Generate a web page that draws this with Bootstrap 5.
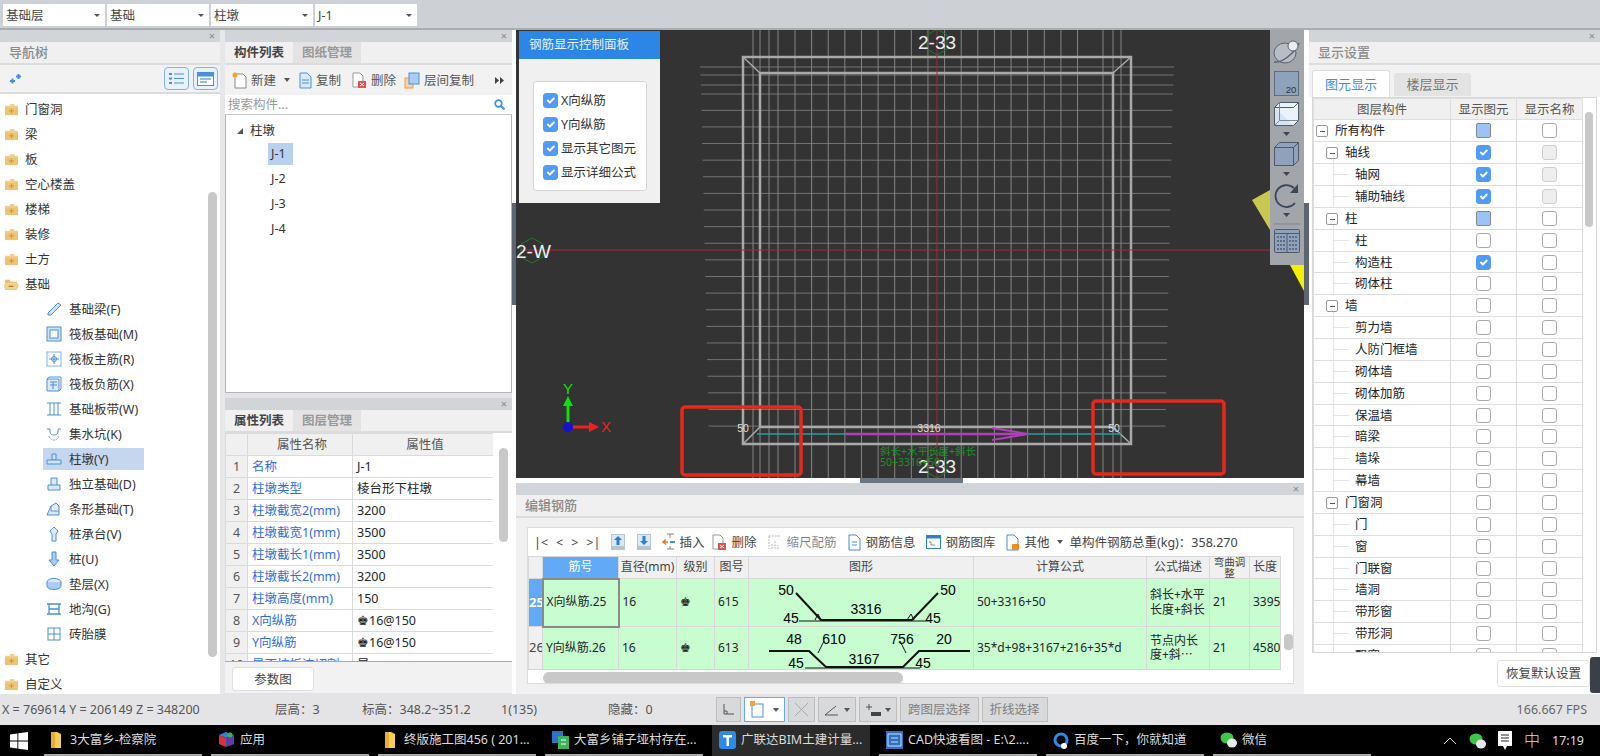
<!DOCTYPE html>
<html lang="zh-CN">
<head>
<meta charset="UTF-8">
<title>广联达BIM土建计量</title>
<link rel="stylesheet" href="https://cdn.jsdelivr.net/npm/bootstrap@5.3.0/dist/css/bootstrap.min.css">
<style>
html, body { height: 756px; overflow: hidden; }
body { width: 1600px; font: 12.5px/1.2 "Noto Sans", "Noto Sans CJK SC", sans-serif; color: #333; background: #e4e4e6; position: relative; }
svg { display: block; flex: none; }
.topbar { height: 30px; background: #cdd0d4; border-bottom: 2px solid #a9acb0; padding: 4px 3px 0; gap: 2px; }
.dd-box { width: 102px; height: 22px; background: #fff; padding: 0 5px 0 3px; font-size: 12.5px; color: #444; }
.dd-caret { width: 0; height: 0; border: 3px solid transparent; border-top: 3px solid #555; border-bottom: 0; }
.workspace { height: 664px; }
.pane { background: #fff; }
.nav-pane { width: 220px; }
.gutter { width: 5px; background: #e6e7e9; }
.mid-col { width: 287px; }
.strip { height: 12px; background: #d1d4d8; color: #888; font-size: 11px; line-height: 12px; text-align: right; padding-right: 5px; flex: none; }
.pane-title { height: 23px; background: #f0f0f0; border-bottom: 2px solid #dcdcdc; color: #8b8b8b; font-size: 13px; font-weight: 500; line-height: 21px; padding-left: 9px; flex: none; }
.nav-tools { height: 29px; background: #f2f2f2; border-bottom: 2px solid #dcdcdc; padding: 0 2px 0 8px; flex: none; }
.view-btn { width: 25px; height: 23px; border: 1.5px solid #7db4ee; border-radius: 4px; background: #e8f2fc; margin-left: 4px; }
.tree-scroll { flex: 1; min-height: 0; overflow: hidden; }
.tree-list { width: 208px; padding-top: 2.5px; }
.nav-row { height: 25px; padding-left: 4px; gap: 6px; }
.nav-sub { padding-left: 46px; gap: 7px; }
.nav-sub.picked { background: linear-gradient(#c5d7ee, #c5d7ee) 43px 1px / 101px 22px no-repeat; }
.fake-thumb { width: 9px; border-radius: 5px; background: #c8c8c8; }
.nav-thumb { height: 465px; margin: 98px 3px 0 0; }
.tabs-row { height: 23px; background: #f0f0f0; border-bottom: 2px solid #dcdcdc; flex: none; }
.tab-on { width: 68px; height: 21px; font-weight: 700; color: #444; font-size: 12.5px; text-align: center; line-height: 22px; }
.tab-off { width: 68px; height: 21px; font-weight: 700; background: #e3e3e3; color: #999; font-size: 12.5px; text-align: center; line-height: 22px; }
.list-tools { height: 30px; background: #f2f2f2; padding-left: 7px; flex: none; color: #555; }
.list-tools .pull-r { margin-left: 11px; }
.search-row { height: 20px; border-bottom: 1px solid #c8c8c8; color: #999; padding: 0 7px 0 3px; flex: none; }
.part-tree { height: 278px; border-left: 1px solid #b5b5b5; border-right: 1px solid #b5b5b5; border-bottom: 1px solid #b5b5b5; padding: 3px 0 0 11px; flex: none; }
.part-row { height: 25px; }
.part-item { width: 25px; height: 22px; margin-left: 31px; padding-left: 3px; line-height: 22px; }
.part-on { background: #b9d1f0; }
.tri-down { width: 0; height: 0; border-style: solid; border-width: 0 0 6px 6px; border-color: transparent transparent #555 transparent; margin-right: 7px; }
.prop-pane { margin-top: 5px; height: 295px; }
.prop-wrap { height: 229px; overflow: hidden; border-bottom: 1px solid #aaa; flex: none; }
.prop-clip { width: 268px; overflow: hidden; }
.grid-a { table-layout: fixed; width: 268px; border-color: #dadada; }
.grid-a > :not(caption) > * > * { padding: 0 0 0 4px; height: 22px; font-size: 12.5px; vertical-align: middle; white-space: nowrap; overflow: hidden; border-width: 1px; }
.grid-a th { background-color: #f0f0f0; font-weight: 400; color: #555; text-align: center; }
.grid-a td.num-cell { background-color: #f0f0f0; text-align: center; padding: 0; color: #555; }
.grid-a td.key-cell { color: #2f6fdc; }
.c-num { width: 22px; } .c-key { width: 105px; } .c-val { width: 141px; }
.prop-thumb { height: 94px; margin: 15px 4px 0 6px; }
.prop-foot { height: 32px; background: #f2f2f2; padding: 5px 0 0 7px; flex: 1; }
.plain-btn { background: #fff; border: 1px solid #e0e0e0; border-radius: 3px; color: #444; font-size: 12.5px; padding: 0; }
.foot-btn { width: 82px; height: 24px; }
.center-col { width: 797px; }
.edge { width: 4px; background: #fff; flex: none; }
.edge-r { width: 5px; }
.edge-tab { height: 102px; margin-top: 173px; background: #5d6670; }
.view-col { width: 788px; }
.canvas-wrap { height: 448px; background: #333; position: relative; overflow: hidden; flex: none; }
.rebar-panel { position: absolute; left: 3px; top: 1px; width: 141px; height: 172px; background: #f0f0f0; }
.rebar-head { height: 28px; background: #2b86e5; color: #e8f2fc; font-size: 12.5px; line-height: 28px; padding-left: 10px; }
.rebar-box { margin: 22px 0 0 14px; width: 114px; height: 110px; background: #fff; border: 1px solid #d5d5d5; border-radius: 3px; padding: 6px 0 0 9px; }
.rebar-line { height: 24px; gap: 3px; font-size: 12.5px; white-space: nowrap; }
.tick { width: 15px; height: 15px; margin: 0; border-radius: 2px; background-color: #fff; border: 1px solid #a8a8a8; flex: none; }
.tick:checked { background-color: #4f9bf5; border-color: #4f9bf5; }
.tick:disabled { opacity: 1; background-color: #eee; border-color: #ccc; }
.tick-part { background-color: #9cc3f7; border: 1.5px solid #888; display: block; }
.tool-strip { position: absolute; left: 754px; top: -1px; width: 34px; height: 236px; background: #a2a5aa; }
.hinge { height: 5px; background: #fff; flex: none; }
.hinge-tab { width: 103px; height: 5px; margin-left: 344px; background: #6c7680; }
.rebar-pane { height: 211px; background: #f0f0f0; flex: none; }
.rebar-card { margin: 9px 10px 0 11px; height: 157px; background: #fff; border: 1px solid #dcdcdc; overflow: hidden; }
.card-tools { height: 28px; padding-left: 6px; color: #444; white-space: nowrap; flex: none; }
.sp-3 { margin-left: 3px; } .sp-7 { margin-left: 7px; } .sp-11 { margin-left: 11px; } .sp-12 { margin-left: 12px; } .sp-20 { margin-left: 20px; }
.grid-scroll-v { width: 9px; height: 16px; background: #c8c8c8; border-radius: 4px; margin: 78px 0 0 3px; }
.grid-b { table-layout: fixed; width: 752px; border-color: #d8d8d8; }
.grid-b > :not(caption) > * > * { padding: 0 0 0 3px; font-size: 12px; vertical-align: middle; border-width: 1px; overflow: hidden; }
.grid-b th { height: 21px; padding: 0; background-color: #f0f0f0; font-weight: 400; text-align: center; color: #444; white-space: nowrap; }
.grid-b th.head-on { background-color: #62aaf8; color: #fff; }
.grid-b th.bend-head { font-size: 10.5px; line-height: 10.5px; white-space: normal; }
.grid-b td { background-color: #c8fdd0; line-height: 1.2; }
.grid-b td.row-no { background-color: #f0f0f0; padding: 0; text-align: center; font-size: 13px; color: #444; }
.grid-b td.row-no-on { background-color: #62aaf8; color: #fff; font-weight: 700; }
.grid-b td.cell-on { border: 2px solid #8a8a8a; }
.grid-b td.shape-cell { padding: 0; }
.h-26 { height: 43px; } .h-25 { height: 48px; }
.w-a { width: 14px; } .w-b { width: 76px; } .w-c { width: 58px; } .w-d { width: 38px; } .w-e { width: 34px; } .w-f { width: 225px; } .w-g { width: 173px; } .w-h { width: 63px; } .w-i { width: 40px; } .w-j { width: 31px; }
.h-bar { height: 12px; width: 360px; margin: 2px 0 0 15px; border-radius: 6px; background: #c8c8c8; }
.right-pane { width: 291px; }
.set-tabs { height: 32px; background: #f2f2f2; padding: 5px 0 0 3px; gap: 4px; flex: none; }
.set-on { width: 78px; height: 27px; background: #fff; border: 1px solid #ddd; border-bottom: 0; border-radius: 3px 3px 0 0; color: #3f8fe8; font-size: 13px; text-align: center; line-height: 26px; }
.set-off { width: 77px; height: 23px; margin-top: 3px; background: #e3e3e3; color: #777; border-radius: 3px 3px 0 0; font-size: 13px; text-align: center; line-height: 23px; }
.layer-box { height: 556px; margin: 0 3px; border: 1px solid #d8d8d8; overflow: hidden; flex: none; }
.grid-c { table-layout: fixed; width: 269px; border-color: #dedede; }
.grid-c > :not(caption) > * > * { padding: 0; height: 22px; font-size: 12.5px; vertical-align: middle; white-space: nowrap; overflow: hidden; border-width: 1px; }
.grid-c th { background-color: #f0f0f0; font-weight: 400; text-align: center; color: #555; height: 21px; }
.grid-c > tbody > tr:nth-child(7n) > td { height: 21px; }
.grid-c .tick { display: block; margin: 0 auto; }
.w-m { width: 137px; } .w-n { width: 66px; }
.lv-0 { padding-left: 2px !important; }
.lv-1 { padding-left: 12px !important; background: linear-gradient(#e4e4e4, #e4e4e4) 19px 16px / 1px 6px no-repeat; }
.lv-2 { padding-left: 41px !important; background: linear-gradient(#e4e4e4, #e4e4e4) 19px 0 / 1px 100% no-repeat, linear-gradient(#e4e4e4, #e4e4e4) 19px 50% / 16px 1px no-repeat; }
.lv-1 .toggle-box, .lv-0 .toggle-box { margin-right: 7px; }
.toggle-box { width: 12px; height: 12px; border: 1px solid #999; border-radius: 2px; display: inline-block; vertical-align: -2px; background: #fff; position: relative; }
.toggle-box::after { content: ""; position: absolute; left: 2.5px; right: 2.5px; top: 4.5px; height: 1px; background: #555; }
.set-thumb { position: absolute; right: 7px; top: 82px; width: 8px; height: 115px; background: #c8c8c8; border-radius: 4px; }
.restore-row { height: 40px; padding: 7px 10px 0 0; justify-content: flex-end; }
.restore-btn { width: 93px; height: 27px; }
.statusbar { height: 31px; background: #e4e4e6; padding-left: 2px; color: #555; white-space: nowrap; font-size: 12.5px; }
.stat-a { width: 273px; } .stat-b { width: 87px; } .stat-c { width: 139px; } .stat-d { width: 107px; } .stat-e { width: 108px; }
.bar-btn { height: 25px; background: #d8d9db; border: 1px solid #bdbdbd; color: #808080; padding: 0 5px; margin-right: 3px; white-space: nowrap; }
.bar-wide { padding: 0 7px; }
.bar-on { background: #fff; border-color: #6aa9e8; }
.fps { margin-left: auto; padding-right: 13px; color: #666; }
.taskbar { height: 31px; background: #000; color: #ddd; font-size: 12.5px; padding-left: 44px; white-space: nowrap; }
.win-logo { position: absolute; left: 10px; bottom: 6px; }
.task-item { width: 158px; height: 31px; margin-right: 9px; padding-left: 7px; gap: 5px; border-bottom: 2px solid #a9a9a9; }
.task-now { background: #2b2b2b; border-bottom-color: #2b2b2b; }
.tray { margin-left: auto; gap: 12px; padding-right: 16px; }
.meter { position: absolute; left: 1590px; top: 657px; width: 10px; height: 36px; background: #3b4048; border-radius: 3px 0 0 3px; }
</style>
</head>
<body>
<svg width="0" height="0" class="position-absolute">
  <symbol id="i-folder" viewBox="0 0 16 14"><path d="M1 3h5l1-2h4v2h4v10H1z" fill="#f1cf8a"/><path d="M1 5h14v8H1z" fill="#edc474"/><path d="M8 6v5M5.5 8.5h5" stroke="#d79a37" stroke-width="1.3"/></symbol>
  <symbol id="i-folder-open" viewBox="0 0 16 14"><path d="M1 2h5l1 2h7v2H1z" fill="#e9bd6a"/><path d="M0 6h16l-2 7H1z" fill="#f1cf8a"/><path d="M5 9h5" stroke="#a97c2c" stroke-width="1.3"/></symbol>
  <symbol id="i-caret" viewBox="0 0 6 4"><path d="M0 0h6L3 4z" fill="#555"/></symbol>
</svg>

<div class="topbar d-flex">
  <div class="dd-box d-flex align-items-center justify-content-between"><span>基础层</span><i class="dd-caret"></i></div>
  <div class="dd-box d-flex align-items-center justify-content-between"><span>基础</span><i class="dd-caret"></i></div>
  <div class="dd-box d-flex align-items-center justify-content-between"><span>柱墩</span><i class="dd-caret"></i></div>
  <div class="dd-box d-flex align-items-center justify-content-between"><span>J-1</span><i class="dd-caret"></i></div>
</div>

<div class="workspace d-flex">
  <!-- nav tree -->
  <div class="pane nav-pane d-flex flex-column">
    <div class="strip">×</div>
    <div class="pane-title">导航树</div>
    <div class="nav-tools d-flex align-items-center">
      <svg width="14" height="12" viewBox="0 0 14 12"><path d="M2 8h5M4.5 5.500v5M8 3.500h5M10.500 1v5" stroke="#3f8fe8" stroke-width="2"/></svg>
      <div class="view-btn ms-auto d-flex align-items-center justify-content-center"><svg width="15" height="13" viewBox="0 0 15 13"><path d="M0 1h3v2H0zM0 5.500h3v2H0zM0 10h3v2H0z" fill="#4a90d9"/><path d="M5 2h10M5 6.500h10M5 11h10" stroke="#4a90d9"/></svg></div>
      <div class="view-btn d-flex align-items-center justify-content-center"><svg width="17" height="14" viewBox="0 0 17 14"><rect x=".5" y=".5" width="16" height="13" fill="#fff" stroke="#4a90d9"/><path d="M.5.5h16v4H.5z" fill="#4a90d9"/><path d="M3 7h11M3 10h7" stroke="#8fbdee" stroke-width="2"/></svg></div>
    </div>
    <div class="tree-scroll d-flex">
      <div class="tree-list" id="navTree"></div>
      <div class="fake-thumb nav-thumb"></div>
    </div>
  </div>
  <div class="gutter"></div>

  <!-- part list and properties -->
  <div class="mid-col d-flex flex-column">
    <div class="pane d-flex flex-column">
      <div class="strip">×</div>
      <div class="tabs-row d-flex"><div class="tab-on">构件列表</div><div class="tab-off">图纸管理</div></div>
      <div class="list-tools d-flex align-items-center">
        <svg width="15" height="17" viewBox="0 0 15 17"><path d="M3 2h8l3 3v11H3z" fill="#fff" stroke="#888"/><circle cx="3" cy="3" r="2.500" fill="#f2a23c"/></svg>
        <span class="ms-1">新建</span>
        <svg class="ms-2" width="6" height="4"><use href="#i-caret"/></svg>
        <svg class="ms-2" width="14" height="17" viewBox="0 0 14 17"><path d="M2 1h7l4 4v11H2z" fill="#dbe9f9" stroke="#4a90d9"/><path d="M4 8h7M4 11h7" stroke="#4a90d9"/></svg>
        <span class="ms-1">复制</span>
        <svg class="pull-r" width="15" height="17" viewBox="0 0 15 17"><path d="M1 1h7l3 3v11H1z" fill="#fff" stroke="#999"/><rect x="6" y="9" width="8" height="7" fill="#e2504c"/><path d="M8 11l4 3M12 11l-4 3" stroke="#fff"/></svg>
        <span class="ms-1">删除</span>
        <svg class="ms-2" width="16" height="17" viewBox="0 0 16 17"><rect x="1" y="6" width="8" height="10" fill="#f6d3a9" stroke="#ef9b45"/><rect x="5" y="1" width="10" height="11" fill="#a9cdf5" stroke="#4a90d9"/></svg>
        <span class="ms-1">层间复制</span>
        <svg class="ms-auto me-2" width="9" height="7" viewBox="0 0 9 7"><path d="M0 0l4 3.500-4 3.500zM5 0l4 3.500-4 3.500z" fill="#444"/></svg>
      </div>
      <div class="search-row d-flex align-items-center justify-content-between"><span>搜索构件...</span>
        <svg width="11" height="11" viewBox="0 0 11 11"><circle cx="4.500" cy="4.500" r="3.300" fill="none" stroke="#3f8fe8" stroke-width="1.700"/><path d="M7 7l3.500 3.500" stroke="#3f8fe8" stroke-width="2"/></svg></div>
      <div class="part-tree">
        <div class="part-row d-flex align-items-center"><i class="tri-down"></i><span>柱墩</span></div>
        <div class="part-row"><div class="part-item part-on">J-1</div></div>
        <div class="part-row"><div class="part-item">J-2</div></div>
        <div class="part-row"><div class="part-item">J-3</div></div>
        <div class="part-row"><div class="part-item">J-4</div></div>
      </div>
    </div>
    <div class="pane prop-pane d-flex flex-column">
      <div class="strip">×</div>
      <div class="tabs-row d-flex"><div class="tab-on">属性列表</div><div class="tab-off">图层管理</div></div>
      <div class="prop-wrap d-flex">
        <div class="prop-clip">
          <table class="table table-bordered mb-0 grid-a">
            <colgroup><col class="c-num"><col class="c-key"><col class="c-val"></colgroup>
            <thead><tr><th></th><th>属性名称</th><th>属性值</th></tr></thead>
            <tbody id="propBody"></tbody>
          </table>
        </div>
        <div class="fake-thumb prop-thumb"></div>
      </div>
      <div class="prop-foot"><button class="plain-btn foot-btn">参数图</button></div>
    </div>
  </div>

  <!-- centre -->
  <div class="center-col d-flex">
    <div class="edge"><div class="edge-tab"></div></div>
    <div class="view-col d-flex flex-column">
      <div class="canvas-wrap">
        <svg id="scene" width="788" height="448" viewBox="516 30 788 448">
          <g id="gridLines"></g>
          <path d="M743 57H1131V444H743zM760 73H1113V427H760z" fill="none" stroke="#a9a9a7" stroke-width="2.500"/>
          <path d="M743 57l17 16M1131 57l-18 16M743 444l17-17M1131 444l-18-17" stroke="#a9a9a7" stroke-width="1.500"/>
          <path d="M937 30V478" stroke="#a52b36"/>
          <path d="M520 250H1270" stroke="#a52b36"/>
          <path d="M757 434H1122" stroke="#2f9c9c" stroke-width="1.500"/>
          <path d="M845 434H1022" stroke="#b040b8" stroke-width="2.500"/>
          <path d="M992 428l36 6-36 6" fill="none" stroke="#b040b8" stroke-width="2"/>
          <path d="M1252 200L1270 190V230z" fill="#c8c850"/>
          <path d="M1290 265H1304V291z" fill="#f5f000"/>
          <g fill="none" stroke="#1d7a2a">
            <path d="M937 29l10 6v14l-10 6-10-6V35z"/>
            <path d="M937 452l10 6v14l-10 6-10-6v-14z"/>
            <path d="M532 238l11 6v13l-11 6-11-6v-13z"/>
          </g>
          <g fill="#eee" font-family="Liberation Sans, sans-serif" font-size="19">
            <text x="937" y="49" text-anchor="middle">2-33</text>
            <text x="937" y="473" text-anchor="middle">2-33</text>
            <text x="516" y="258">2-W</text>
          </g>
          <g fill="#ddd" font-family="Liberation Sans, sans-serif" font-size="10.500" text-anchor="middle">
            <text x="743" y="432">50</text><text x="929" y="432">3316</text><text x="1114" y="432">50</text>
          </g>
          <g fill="#1f8f2a" font-size="10.500">
            <text x="880" y="455">斜长+水平长度+斜长</text><text x="880" y="466">50+3316+50</text>
          </g>
          <path d="M568 427V403" stroke="#0de00d" stroke-width="3"/><path d="M568 396l5 10h-10z" fill="#0de00d"/>
          <path d="M572 427H590" stroke="#f02020" stroke-width="3"/><path d="M599 427l-10-5v10z" fill="#f02020"/>
          <circle cx="568" cy="427" r="5" fill="#1212d0"/>
          <text x="568" y="394" fill="#0de00d" font-size="15" text-anchor="middle" font-family="Liberation Sans, sans-serif">Y</text>
          <text x="601" y="432" fill="#f02020" font-size="15" font-family="Liberation Sans, sans-serif">X</text>
          <rect x="682" y="407" width="119" height="68" rx="3" fill="none" stroke="#e8281a" stroke-width="3.500"/>
          <rect x="1093" y="401" width="131" height="73" rx="3" fill="none" stroke="#e8281a" stroke-width="3.500"/>
        </svg>
        <div class="rebar-panel">
          <div class="rebar-head">钢筋显示控制面板</div>
          <div class="rebar-box">
            <label class="rebar-line d-flex align-items-center"><input class="form-check-input tick" type="checkbox" checked>X向纵筋</label>
            <label class="rebar-line d-flex align-items-center"><input class="form-check-input tick" type="checkbox" checked>Y向纵筋</label>
            <label class="rebar-line d-flex align-items-center"><input class="form-check-input tick" type="checkbox" checked>显示其它图元</label>
            <label class="rebar-line d-flex align-items-center"><input class="form-check-input tick" type="checkbox" checked>显示详细公式</label>
          </div>
        </div>
        <div class="tool-strip">
          <svg width="34" height="236" viewBox="0 0 34 236">
            <ellipse cx="15" cy="24" rx="11" ry="10" fill="#b9bcc2" stroke="#5a6472"/>
            <path d="M4 33c8 1 20-8 25-19" fill="none" stroke="#5a6472" stroke-width="1.500"/>
            <circle cx="23" cy="17" r="5" fill="#e9ecf0" stroke="#5a6472"/>
            <rect x="4.500" y="42.500" width="24" height="24" fill="#8ea3bb" stroke="#5f6d7c"/>
            <text x="21" y="64" font-size="9.500" fill="#333" text-anchor="middle" font-family="Liberation Sans, sans-serif">20</text>
            <path d="M4.500 78.500h19v18h-19z" fill="#d4e4f5" stroke="#4e5a68"/>
            <path d="M4.500 78.500l5-5h19v18l-5 5M23.500 78.500l5-5" fill="#eaf2fb" stroke="#4e5a68"/>
            <path d="M4.500 78.500l5-5h19l-5 5z" fill="#eaf2fb" stroke="#4e5a68"/>
            <path d="M9.500 73.500v18h19M4.500 96.500l5-5" fill="none" stroke="#7d8a98"/>
            <path d="M13 103h7l-3.500 4z" fill="#3c4654"/>
            <path d="M4.500 118.500h19v18h-19z" fill="#8ea3bb" stroke="#4e5a68"/>
            <path d="M4.500 118.500l5-5h19l-5 5zM23.500 118.500l5-5v18l-5 5z" fill="#8ea3bb" stroke="#4e5a68"/>
            <path d="M13 143h7l-3.500 4z" fill="#3c4654"/>
            <path d="M24 159a11 11 0 1 0 1 15" fill="none" stroke="#3c4654" stroke-width="1.800"/><path d="M28 155v9h-8z" fill="#3c4654"/>
            <path d="M13 184h7l-3.500 4z" fill="#3c4654"/>
            <path d="M4 195h26" stroke="#7d858e"/>
            <rect x="4.500" y="200.500" width="25" height="23" rx="1" fill="#8ea3bb" stroke="#4e5a68"/>
            <path d="M4.500 204.500h25M17 204.500v19" stroke="#4e5a68"/>
            <path d="M7 208h8M7 212h8M7 216h8M7 220h8M19 208h8M19 212h8M19 216h8M19 220h8" stroke="#2f3944" stroke-dasharray="2 1"/>
          </svg>
        </div>
      </div>
      <div class="hinge"><div class="hinge-tab"></div></div>
      <div class="rebar-pane d-flex flex-column">
        <div class="strip">×</div>
        <div class="pane-title">编辑钢筋</div>
        <div class="rebar-card">
          <div class="card-tools d-flex align-items-center">
            <span>|&lt;</span><span class="ms-2">&lt;</span><span class="ms-2">&gt;</span><span class="ms-2">&gt;|</span>
            <svg class="sp-11" width="14" height="16" viewBox="0 0 14 16"><rect width="14" height="16" fill="#b8c4d2"/><rect x="1" y="1" width="12" height="11" fill="#dbe9f9"/><path d="M7 2l4 4H8.500v5h-3V6H3z" fill="#2c7fd8"/></svg>
            <svg class="sp-12" width="14" height="16" viewBox="0 0 14 16"><rect width="14" height="16" fill="#b8c4d2"/><rect x="1" y="1" width="12" height="11" fill="#dbe9f9"/><path d="M7 11l4-4H8.500V2h-3v5H3z" fill="#2c7fd8"/></svg>
            <svg class="sp-11" width="13" height="18" viewBox="0 0 13 18"><path d="M5 1h7M5 16h7M8 1v4M8 13v3" stroke="#888"/><path d="M6 9H1M4 6.500L1 9l3 2.500" fill="none" stroke="#e67c1f" stroke-width="1.500"/><path d="M8 9h5" stroke="#4a90d9" stroke-width="2"/></svg>
            <span class="ms-1">插入</span>
            <svg class="ms-2" width="15" height="17" viewBox="0 0 15 17"><path d="M1 1h7l3 3v11H1z" fill="#fff" stroke="#999"/><rect x="6" y="9" width="8" height="7" fill="#e2504c"/><path d="M8 11l4 3M12 11l-4 3" stroke="#fff"/></svg>
            <span class="ms-1">删除</span>
            <svg class="sp-11" width="15" height="16" viewBox="0 0 15 16"><path d="M2 2h11M2 2v13M5 15V9M8 15V6M11 15v-4" stroke="#bbb" fill="none" stroke-dasharray="2 1"/></svg>
            <span class="ms-1 text-black-50">缩尺配筋</span>
            <svg class="sp-12" width="13" height="17" viewBox="0 0 13 17"><path d="M1 1h7l4 4v11H1z" fill="#fff" stroke="#3f8fe8"/><path d="M4 8h5M4 11h5" stroke="#3f8fe8"/></svg>
            <span class="ms-1">钢筋信息</span>
            <svg class="sp-11" width="15" height="14" viewBox="0 0 15 14"><rect x=".5" y=".5" width="14" height="13" fill="#fff" stroke="#2c7fd8"/><path d="M.5.5h14v3H.5z" fill="#2c7fd8"/><path d="M3 7h2v3h4" stroke="#888" fill="none"/></svg>
            <span class="ms-1">钢筋图库</span>
            <svg class="sp-11" width="14" height="17" viewBox="0 0 14 17"><path d="M1 1h7l4 4v11H1z" fill="#fff" stroke="#3f8fe8"/><rect x="6" y="10" width="7" height="6" fill="#f28a1c"/></svg>
            <span class="ms-1">其他</span>
            <svg class="sp-7" width="6" height="4"><use href="#i-caret"/></svg>
            <span class="sp-7">单构件钢筋总重(kg)：358.270</span>
          </div>
          <div class="d-flex">
            <table class="table table-bordered mb-0 grid-b">
              <colgroup><col class="w-a"><col class="w-b"><col class="w-c"><col class="w-d"><col class="w-e"><col class="w-f"><col class="w-g"><col class="w-h"><col class="w-i"><col class="w-j"></colgroup>
              <thead><tr><th></th><th class="head-on">筋号</th><th>直径(mm)</th><th>级别</th><th>图号</th><th>图形</th><th>计算公式</th><th>公式描述</th><th class="bend-head">弯曲调整</th><th>长度</th></tr></thead>
              <tbody>
                <tr class="h-25">
                  <td class="row-no row-no-on">25</td><td class="cell-on">X向纵筋.25</td><td>16</td><td>♚</td><td>615</td>
                  <td class="shape-cell"><svg width="225" height="47" viewBox="0 0 225 47" font-size="14" font-family="Liberation Sans, sans-serif">
                    <path d="M47 14L72 41H163L189 14" fill="none" stroke="#111" stroke-width="2"/><path d="M50 42H181M66 41l3-6 3 6M158 41l4-6 3 6" fill="none" stroke="#111"/>
                    <text x="37" y="16" text-anchor="middle">50</text><text x="199" y="16" text-anchor="middle">50</text><text x="117" y="35" text-anchor="middle">3316</text><text x="42" y="44" text-anchor="middle">45</text><text x="184" y="44" text-anchor="middle">45</text>
                  </svg></td>
                  <td>50+3316+50</td><td>斜长+水平长度+斜长</td><td>21</td><td>3395</td>
                </tr>
                <tr class="h-26">
                  <td class="row-no">26</td><td>Y向纵筋.26</td><td>16</td><td>♚</td><td>613</td>
                  <td class="shape-cell"><svg width="225" height="42" viewBox="0 0 225 42" font-size="14" font-family="Liberation Sans, sans-serif">
                    <path d="M20 24H60L77 40H154L170 24H221" fill="none" stroke="#111" stroke-width="2"/><path d="M56 41H171M69 26l6-12M157 26l-6-12" fill="none" stroke="#111"/>
                    <text x="45" y="17" text-anchor="middle">48</text><text x="85" y="17" text-anchor="middle">610</text><text x="153" y="17" text-anchor="middle">756</text><text x="195" y="17" text-anchor="middle">20</text><text x="115" y="37" text-anchor="middle">3167</text><text x="47" y="41" text-anchor="middle">45</text><text x="174" y="41" text-anchor="middle">45</text>
                  </svg></td>
                  <td>35*d+98+3167+216+35*d</td><td>节点内长度+斜⋯</td><td>21</td><td>4580</td>
                </tr>
              </tbody>
            </table>
            <div class="grid-scroll-v"></div>
          </div>
          <div class="h-bar"></div>
        </div>
      </div>
    </div>
    <div class="edge edge-r"><div class="edge-tab"></div></div>
  </div>

  <!-- display settings -->
  <div class="pane right-pane d-flex flex-column position-relative">
    <div class="strip">×</div>
    <div class="pane-title">显示设置</div>
    <div class="set-tabs d-flex"><div class="set-on">图元显示</div><div class="set-off">楼层显示</div></div>
    <div class="layer-box">
      <table class="table table-bordered mb-0 grid-c">
        <colgroup><col class="w-m"><col class="w-n"><col class="w-n"></colgroup>
        <thead><tr><th>图层构件</th><th>显示图元</th><th>显示名称</th></tr></thead>
        <tbody id="layerBody"></tbody>
      </table>
    </div>
    <div class="set-thumb"></div>
    <div class="restore-row d-flex"><button class="plain-btn restore-btn">恢复默认设置</button></div>
  </div>
</div>

<div class="statusbar d-flex align-items-center">
  <span class="stat-a">X = 769614 Y = 206149 Z = 348200</span>
  <span class="stat-b">层高：3</span>
  <span class="stat-c">标高：348.2~351.2</span>
  <span class="stat-d">1(135)</span>
  <span class="stat-e">隐藏：0</span>
  <div class="bar-btn d-flex align-items-center"><svg width="13" height="13" viewBox="0 0 13 13"><path d="M2 1v10h10M5 8v3M2 8h3" fill="none" stroke="#555"/></svg></div>
  <div class="bar-btn bar-on d-flex align-items-center"><svg width="15" height="17" viewBox="0 0 15 17"><rect x="2" y="3" width="11" height="13" fill="#fff" stroke="#4a90d9"/><rect x="0" y="0" width="5" height="5" fill="#f2a23c"/></svg><svg class="ms-2" width="6" height="4"><use href="#i-caret"/></svg></div>
  <div class="bar-btn d-flex align-items-center"><svg width="15" height="15" viewBox="0 0 15 15"><path d="M1 1l13 13M14 1L1 14" stroke="#aaa"/></svg></div>
  <div class="bar-btn d-flex align-items-center"><svg width="16" height="14" viewBox="0 0 16 14"><path d="M1 12L12 3M1 12h13" fill="none" stroke="#555"/></svg><svg class="ms-1" width="6" height="4"><use href="#i-caret"/></svg></div>
  <div class="bar-btn d-flex align-items-center"><svg width="16" height="14" viewBox="0 0 16 14"><path d="M4 1v6M1 4h6" stroke="#555"/><rect x="6" y="9" width="10" height="4" fill="#444"/></svg><svg class="ms-1" width="6" height="4"><use href="#i-caret"/></svg></div>
  <div class="bar-btn bar-wide d-flex align-items-center">跨图层选择</div>
  <div class="bar-btn bar-wide d-flex align-items-center">折线选择</div>
  <span class="fps">166.667 FPS</span>
</div>

<div class="taskbar d-flex">
  <svg class="win-logo" width="18" height="18" viewBox="0 0 18 18"><path d="M0 2.500l7.400-1v7H0zM8.300 1.300L18 0v8.500H8.300zM0 9.500h7.400v7l-7.400-1zM8.300 9.500H18V18l-9.700-1.300z" fill="#fff"/></svg>
  <div class="task-item d-flex align-items-center"><svg width="10" height="16" viewBox="0 0 10 16"><path d="M0 0h6l4 2v14H0z" fill="#f6cf5b"/><path d="M0 0h4v16H0z" fill="#e9ad33"/></svg><span class="ms-1">3大富乡-检察院</span></div>
  <div class="task-item d-flex align-items-center"><svg width="17" height="17" viewBox="0 0 17 17"><path d="M1 4l7-3 8 3-8 3z" fill="#3a7de0"/><path d="M1 4l7 3v9l-7-3z" fill="#d9352e"/><path d="M16 4l-8 3v9l8-3z" fill="#5a3fa8"/><circle cx="12" cy="4" r="2.500" fill="#38b44a"/></svg><span>应用</span></div>
  <div class="task-item d-flex align-items-center"><svg width="10" height="16" viewBox="0 0 10 16"><path d="M0 0h6l4 2v14H0z" fill="#f6cf5b"/><path d="M0 0h4v16H0z" fill="#e9ad33"/></svg><span class="ms-1">终版施工图456 ( 201...</span></div>
  <div class="task-item d-flex align-items-center"><svg width="17" height="18" viewBox="0 0 17 18"><rect width="11" height="12" fill="#2f6fd0"/><rect x="6" y="5" width="11" height="13" fill="#3bb45a"/><path d="M9 9h5M9 13h5" stroke="#fff"/></svg><span>大富乡铺子垭村存在...</span></div>
  <div class="task-item task-now d-flex align-items-center"><svg width="17" height="18" viewBox="0 0 17 18"><rect width="17" height="18" rx="3" fill="#2c8be8"/><path d="M4 4h9v2.500H10V15H7.500V6.500H4z" fill="#fff"/></svg><span>广联达BIM土建计量...</span></div>
  <div class="task-item d-flex align-items-center"><svg width="17" height="18" viewBox="0 0 17 18"><rect width="17" height="18" fill="#2f6fc0"/><rect x="2" y="3" width="13" height="12" fill="none" stroke="#cfe1f7"/><path d="M5 7h7M5 11h7" stroke="#cfe1f7"/></svg><span>CAD快速看图 - E:\2....</span></div>
  <div class="task-item d-flex align-items-center"><svg width="16" height="18" viewBox="0 0 16 18"><circle cx="8" cy="9" r="6" fill="none" stroke="#2c8be8" stroke-width="3"/><circle cx="11" cy="15" r="3" fill="#fff"/></svg><span>百度一下，你就知道</span></div>
  <div class="task-item d-flex align-items-center"><svg width="17" height="16" viewBox="0 0 17 16"><ellipse cx="7" cy="6" rx="6.500" ry="5.500" fill="#3ec64a"/><ellipse cx="12" cy="11" rx="5" ry="4.500" fill="#e8e8e8"/></svg><span>微信</span></div>
  <div class="tray d-flex align-items-center">
    <svg width="14" height="8" viewBox="0 0 14 8"><path d="M1 7l6-6 6 6" fill="none" stroke="#ddd"/></svg>
    <svg width="17" height="16" viewBox="0 0 17 16"><ellipse cx="7" cy="6" rx="6.500" ry="5.500" fill="#3ec64a"/><ellipse cx="12" cy="11" rx="5" ry="4.500" fill="#e8e8e8"/></svg>
    <svg width="14" height="19" viewBox="0 0 14 19"><path d="M0 0h14v15H9l-2 4-2-4H0z" fill="#fff"/><path d="M3 4h8M3 7h8M3 10h8" stroke="#222"/></svg>
    <span class="fs-6 fw-light">中</span>
    <span>17:19</span>
  </div>
</div>
<div class="meter"></div>

<script>
  // canvas grid
  let lines = "";
  let hy = [67, 75, 85, 94];
  for (let y = 110.3; y < 430; y += 16.62) hy.push(y);
  hy.forEach((y, i) => {
    let k = i / hy.length * 9;
    lines += `<path d="M${700 + k} ${y}H${1174 - k}" stroke="#747474"/>`;
  });
  let vx = [753, 760, 769, 778];
  for (let x = 795; x < 1090; x += 16.62) vx.push(x);
  vx.push(1103, 1113, 1121);
  vx.forEach(x => { lines += `<path d="M${x} 30V478" stroke="#858585"/>`; });
  document.getElementById("gridLines").innerHTML = lines;

  // nav tree
  const ico = {
    beam: '<path d="M2 12L12 2l3 2L5 14H2z" fill="#cfe1f7" stroke="#4a90d9"/>',
    raft: '<rect x="1" y="1" width="14" height="14" fill="#cfe1f7" stroke="#4a90d9"/><rect x="4" y="4" width="8" height="8" fill="#fff" stroke="#4a90d9"/>',
    main: '<rect x="1" y="1" width="14" height="14" fill="#fff" stroke="#7db4ee"/><path d="M8 3v10M3 8h10" stroke="#4a90d9"/><circle cx="8" cy="8" r="2.500" fill="none" stroke="#4a90d9"/>',
    neg: '<path d="M1 3h12v12H1z" fill="#dbe9f9" stroke="#4a90d9"/><path d="M1 3l2-2h12v12l-2 2" fill="none" stroke="#4a90d9"/><path d="M4 6h7M7 6v7M4 9h7" stroke="#4a90d9"/>',
    band: '<path d="M1 2h14M1 14h14M4 2v12M8 2v12M12 2v12" stroke="#4a90d9" fill="none"/>',
    pit: '<path d="M1 3h3v3c0 2 2 3 4 3s4-1 4-3V3h3" fill="none" stroke="#4a90d9"/><path d="M3 10c1 3 3 4 5 4s4-1 5-4" fill="none" stroke="#999" stroke-dasharray="2 1"/>',
    pier: '<path d="M6 3h4v6H6z" fill="#cfe1f7" stroke="#4a90d9"/><path d="M1 9h14v4H1z" fill="#cfe1f7" stroke="#4a90d9"/>',
    iso: '<path d="M2 9h12v5H2zM5 9V2h6v7" fill="#dbe9f9" stroke="#4a90d9"/>',
    strip: '<path d="M1 14l4-9 5-3 3 3v9zM5 5v5h8" fill="#dbe9f9" stroke="#4a90d9"/>',
    cap: '<path d="M8 1l4 4-2 3v7H6V8L4 5z" fill="#dbe9f9" stroke="#4a90d9"/>',
    pile: '<path d="M6 1h4v8h3l-5 6-5-6h3z" fill="#a9cdf5" stroke="#4a90d9"/>',
    pad: '<ellipse cx="8" cy="6" rx="7" ry="3.500" fill="#dbe9f9" stroke="#4a90d9"/><path d="M1 6v4c0 2 3 3.500 7 3.500s7-1.500 7-3.500V6" fill="#a9cdf5" stroke="#4a90d9"/>',
    ditch: '<path d="M1 3h14M3 3v10M13 3v10M1 13h14M3 8h10" fill="none" stroke="#4a90d9" stroke-width="1.300"/>',
    film: '<rect x="2" y="2" width="12" height="12" fill="#fff" stroke="#4a90d9"/><path d="M8 2v12M2 8h12" stroke="#4a90d9"/>'
  };
  const folders = ["门窗洞", "梁", "板", "空心楼盖", "楼梯", "装修", "土方"];
  const subs = [["基础梁(F)", "beam"], ["筏板基础(M)", "raft"], ["筏板主筋(R)", "main"], ["筏板负筋(X)", "neg"], ["基础板带(W)", "band"], ["集水坑(K)", "pit"], ["柱墩(Y)", "pier"], ["独立基础(D)", "iso"], ["条形基础(T)", "strip"], ["桩承台(V)", "cap"], ["桩(U)", "pile"], ["垫层(X)", "pad"], ["地沟(G)", "ditch"], ["砖胎膜", "film"]];
  const folderRow = (t, id) => `<div class="nav-row d-flex align-items-center"><svg width="15" height="13"><use href="#${id}"/></svg><span>${t}</span></div>`;
  let nav = folders.map(t => folderRow(t, "i-folder")).join("") + folderRow("基础", "i-folder-open");
  subs.forEach(s => {
    nav += `<div class="nav-row nav-sub d-flex align-items-center ${s[1] == "pier" ? "picked" : ""}"><svg width="16" height="16" viewBox="0 0 16 16">${ico[s[1]]}</svg><span>${s[0]}</span></div>`;
  });
  nav += folderRow("其它", "i-folder") + folderRow("自定义", "i-folder");
  document.getElementById("navTree").innerHTML = nav;

  // property rows
  const props = [["名称", "J-1"], ["柱墩类型", "棱台形下柱墩"], ["柱墩截宽2(mm)", "3200"], ["柱墩截宽1(mm)", "3500"], ["柱墩截长1(mm)", "3500"], ["柱墩截长2(mm)", "3200"], ["柱墩高度(mm)", "150"], ["X向纵筋", "♚16@150"], ["Y向纵筋", "♚16@150"], ["是否按板边切割", "是"]];
  document.getElementById("propBody").innerHTML = props.map((p, i) =>
    `<tr><td class="num-cell">${i + 1}</td><td class="key-cell">${p[0]}</td><td>${p[1]}</td></tr>`).join("");

  // layer rows: name, level, shape state, name state
  const layers = [["所有构件", 0, "p", ""], ["轴线", 1, "c", "d"], ["轴网", 2, "c", "d"], ["辅助轴线", 2, "c", "d"], ["柱", 1, "p", ""], ["柱", 2, "", ""], ["构造柱", 2, "c", ""], ["砌体柱", 2, "", ""], ["墙", 1, "", ""], ["剪力墙", 2, "", ""], ["人防门框墙", 2, "", ""], ["砌体墙", 2, "", ""], ["砌体加筋", 2, "", ""], ["保温墙", 2, "", ""], ["暗梁", 2, "", ""], ["墙垛", 2, "", ""], ["幕墙", 2, "", ""], ["门窗洞", 1, "", ""], ["门", 2, "", ""], ["窗", 2, "", ""], ["门联窗", 2, "", ""], ["墙洞", 2, "", ""], ["带形窗", 2, "", ""], ["带形洞", 2, "", ""], ["飘窗", 2, "", ""]];
  const tick = s => s == "p" ? '<span class="tick tick-part mx-auto"></span>'
    : `<input class="form-check-input tick" type="checkbox" ${s == "c" ? "checked" : ""} ${s == "d" ? "disabled" : ""}>`;
  document.getElementById("layerBody").innerHTML = layers.map(l =>
    `<tr><td class="lv-${l[1]}">${l[1] < 2 ? '<i class="toggle-box"></i>' : ""}${l[0]}</td><td>${tick(l[2])}</td><td>${tick(l[3])}</td></tr>`).join("");
</script>
</body>
</html>
